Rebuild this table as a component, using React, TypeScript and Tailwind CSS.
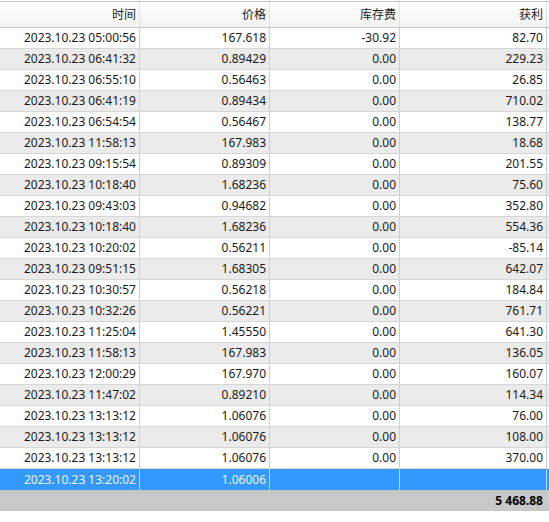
const rows: [string, string, string, string][] = [
  ["2023.10.23 05:00:56", "167.618", "-30.92", "82.70"],
  ["2023.10.23 06:41:32", "0.89429", "0.00", "229.23"],
  ["2023.10.23 06:55:10", "0.56463", "0.00", "26.85"],
  ["2023.10.23 06:41:19", "0.89434", "0.00", "710.02"],
  ["2023.10.23 06:54:54", "0.56467", "0.00", "138.77"],
  ["2023.10.23 11:58:13", "167.983", "0.00", "18.68"],
  ["2023.10.23 09:15:54", "0.89309", "0.00", "201.55"],
  ["2023.10.23 10:18:40", "1.68236", "0.00", "75.60"],
  ["2023.10.23 09:43:03", "0.94682", "0.00", "352.80"],
  ["2023.10.23 10:18:40", "1.68236", "0.00", "554.36"],
  ["2023.10.23 10:20:02", "0.56211", "0.00", "-85.14"],
  ["2023.10.23 09:51:15", "1.68305", "0.00", "642.07"],
  ["2023.10.23 10:30:57", "0.56218", "0.00", "184.84"],
  ["2023.10.23 10:32:26", "0.56221", "0.00", "761.71"],
  ["2023.10.23 11:25:04", "1.45550", "0.00", "641.30"],
  ["2023.10.23 11:58:13", "167.983", "0.00", "136.05"],
  ["2023.10.23 12:00:29", "167.970", "0.00", "160.07"],
  ["2023.10.23 11:47:02", "0.89210", "0.00", "114.34"],
  ["2023.10.23 13:13:12", "1.06076", "0.00", "76.00"],
  ["2023.10.23 13:13:12", "1.06076", "0.00", "108.00"],
  ["2023.10.23 13:13:12", "1.06076", "0.00", "370.00"],
];

const cols = "grid grid-cols-[140px_130px_130px_147px]";

export default function App() {
  return (
    <div
      className="w-[549px] h-[522px] bg-white text-[12px] text-[#1a1a1a] leading-none"
      style={{ fontFamily: '"Noto Sans", "Noto Sans CJK SC", sans-serif' }}
    >
      {/* header */}
      <div className="pt-px">
        <div className={`${cols} h-[27px] border-t border-b border-[#c4c4c4] bg-gradient-to-b from-white to-[#f2f2f2]`}>
          {["时间", "价格", "库存费", "获利"].map((h) => (
            <div key={h} className="flex items-center justify-end pr-[3px] border-r border-[#e2e2e2]">
              {h}
            </div>
          ))}
        </div>
      </div>

      {/* body */}
      {rows.map((r, i) => (
        <div
          key={i}
          className={`${cols} h-[21px] border-b border-[#d6d6d6] ${i % 2 === 1 ? "bg-[#ebebeb]" : "bg-white"}`}
        >
          {r.map((c, j) => (
            <div key={j} className="flex items-center justify-end pr-[3px] border-r border-[#cfcfcf]">
              {c}
            </div>
          ))}
        </div>
      ))}

      {/* selected row */}
      <div className={`${cols} h-[21px] bg-[#3399ff] text-[#eef5ff]`}>
        {["2023.10.23 13:20:02", "1.06006", "", ""].map((c, j) => (
          <div key={j} className="flex items-center justify-end pr-[3px] border-r border-[#bcd6ee]">
            {c}
          </div>
        ))}
      </div>

      {/* total */}
      <div className="h-[21px] bg-[#c8c8c8] flex items-center justify-end pr-[6px] font-bold text-black">
        5 468.88
      </div>
    </div>
  );
}
